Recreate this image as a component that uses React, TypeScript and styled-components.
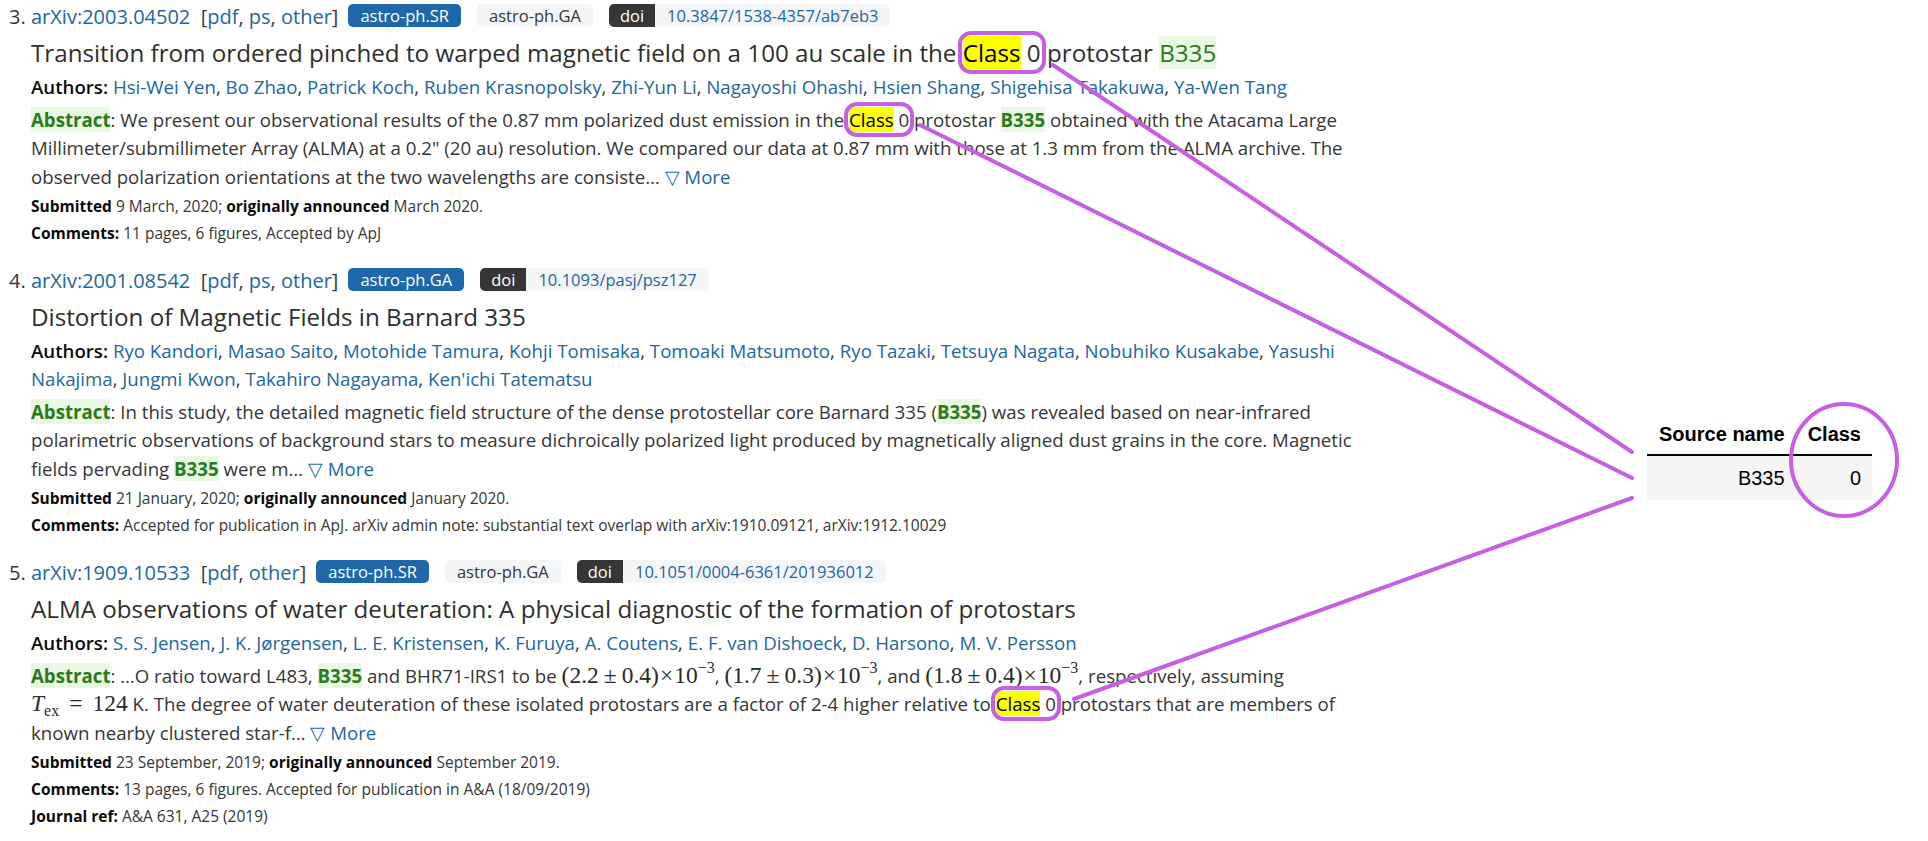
import React from 'react';
import styled, { createGlobalStyle } from 'styled-components';

const GlobalStyle = createGlobalStyle`
  html, body {
    margin: 0;
    padding: 0;
    background: #ffffff;
  }

  body {
    font-family: "Open Sans", "Noto Sans", sans-serif;
    color: #363636;
  }
`;

const Page = styled.div`
  position: relative;
  display: flex;
  align-items: flex-start;
  width: 1928px;
  height: 841px;
  overflow: hidden;
`;

const ResultList = styled.ol`
  margin: 0;
  padding: 3px 0 0 31px;
  width: 1339px;
  flex-shrink: 0;
`;

const Result = styled.li`
  font-size: 20px;
  line-height: 28px;
  margin-bottom: 21px;
`;

const ListTitle = styled.p`
  margin: 0;
  font-size: 20px;
  line-height: 28px;
  white-space: nowrap;
`;

const Link = styled.a`
  color: #2167a1;
  text-decoration: none;
`;

const TagGroup = styled.span`
  margin-left: 10px;
`;

const Tag = styled.span<{ $primary?: boolean }>`
  display: inline-flex;
  align-items: center;
  height: 23px;
  padding: 0 12px;
  margin-right: 16px;
  border-radius: 5px;
  font-size: 16.5px;
  line-height: 23px;
  vertical-align: 2px;
  background: ${(p) => (p.$primary ? '#1e67a9' : '#f4f5f6')};
  color: ${(p) => (p.$primary ? '#ffffff' : '#363636')};
`;

const DoiTag = styled.span`
  display: inline-flex;
  height: 23px;
  border-radius: 5px;
  overflow: hidden;
  font-size: 16.5px;
  line-height: 23px;
  vertical-align: 2px;
`;

const DoiLabel = styled.span`
  padding: 0 11px;
  background: #363636;
  color: #ffffff;
`;

const DoiValue = styled.a`
  padding: 0 12px;
  background: #f4f5f6;
  color: #2167a1;
  text-decoration: none;
`;

const Title = styled.p`
  margin: 6px 0 0;
  font-size: 24.2px;
  line-height: 32px;
  font-weight: 400;
  color: #2e2e2e;
`;

const Authors = styled.p`
  margin: 4px 0 0;
  font-size: 18.67px;
  line-height: 28px;
`;

const Label = styled.span`
  font-weight: 600;
  color: #0a0a0a;
`;

const Abstract = styled.p`
  margin: 4.75px 0 0;
  font-size: 18.67px;
  line-height: 28.5px;
`;

const Hit = styled.span<{ $bold?: boolean }>`
  color: #2b7a1e;
  background: #e8f8e2;
  font-weight: ${(p) => (p.$bold ? 700 : 'inherit')};
`;

const Mark = styled.span`
  background: #ffff00;
  color: #000000;
`;

const Boxed = styled.span`
  outline: 4px solid #c65fe2;
  outline-offset: 1px;
  border-radius: 8px;
`;

const MathText = styled.span`
  font-family: "Liberation Serif", "DejaVu Serif", serif;
  font-size: 23.5px;
  line-height: 1;
  color: #2a2a2a;
`;

const MathVar = styled.i`
  font-style: italic;
`;

const Op = styled.span<{ $space?: number }>`
  margin: 0 ${(p) => p.$space ?? 5}px;
`;

const Sup = styled.sup`
  font-size: 16px;
  line-height: 0;
  vertical-align: 10px;
`;

const Sub = styled.sub`
  font-size: 16px;
  line-height: 0;
  vertical-align: -5px;
`;

const Meta = styled.p<{ $gap?: number }>`
  margin: ${(p) => p.$gap ?? 1}px 0 0;
  font-size: 15.5px;
  line-height: 26px;
`;

const Strong = styled.span`
  font-weight: 700;
  color: #0a0a0a;
`;

const Aside = styled.aside`
  margin-left: auto;
  margin-right: 56px;
  padding-top: 413px;
`;

const DataTable = styled.table`
  border-collapse: collapse;
  font-family: "Liberation Sans", Arial, sans-serif;
  font-size: 20px;
  line-height: 24px;
  color: #000000;
`;

const HeadCell = styled.th`
  padding: 9px 11px 8px 12px;
  text-align: right;
  font-weight: 700;
  border-bottom: 2px solid #000000;
`;

const BodyCell = styled.td`
  padding: 10px 11px 10px 12px;
  text-align: right;
  background: #f5f5f5;
`;

const Overlay = styled.svg`
  position: absolute;
  top: 0;
  left: 0;
  width: 1928px;
  height: 841px;
  pointer-events: none;
  z-index: 2;
`;

const More = () => <Link href="#">▽ More</Link>;

const ClassZero = () => (
  <Boxed>
    <Mark>Class</Mark> 0
  </Boxed>
);

const Ratio = ({ value, error }: { value: string; error: string }) => (
  <MathText>
    ({value}
    <Op>±</Op>
    {error})<Op $space={1}>×</Op>10<Sup>−3</Sup>
  </MathText>
);

export default function App() {
  return (
    <>
      <GlobalStyle />
      <Page>
        <ResultList start={3}>
          <Result>
            <ListTitle>
              <Link href="#">arXiv:2003.04502</Link>
              {'\u00a0\u00a0'}[<Link href="#">pdf</Link>, <Link href="#">ps</Link>, <Link href="#">other</Link>]
              <TagGroup>
                <Tag $primary>astro-ph.SR</Tag>
                <Tag>astro-ph.GA</Tag>
                <DoiTag>
                  <DoiLabel>doi</DoiLabel>
                  <DoiValue href="#">10.3847/1538-4357/ab7eb3</DoiValue>
                </DoiTag>
              </TagGroup>
            </ListTitle>
            <Title>
              Transition from ordered pinched to warped magnetic field on a 100 au scale in the <ClassZero /> protostar{' '}
              <Hit>B335</Hit>
            </Title>
            <Authors>
              <Label>Authors:</Label> <Link href="#">Hsi-Wei Yen</Link>, <Link href="#">Bo Zhao</Link>,{' '}
              <Link href="#">Patrick Koch</Link>, <Link href="#">Ruben Krasnopolsky</Link>, <Link href="#">Zhi-Yun Li</Link>,{' '}
              <Link href="#">Nagayoshi Ohashi</Link>, <Link href="#">Hsien Shang</Link>, <Link href="#">Shigehisa Takakuwa</Link>,{' '}
              <Link href="#">Ya-Wen Tang</Link>
            </Authors>
            <Abstract>
              <Hit $bold>Abstract</Hit>: We present our observational results of the 0.87 mm polarized dust emission in the{' '}
              <ClassZero /> protostar <Hit $bold>B335</Hit> obtained with the Atacama Large Millimeter/submillimeter Array (ALMA)
              at a 0.2" (20 au) resolution. We compared our data at 0.87 mm with those at 1.3 mm from the ALMA archive. The
              observed polarization orientations at the two wavelengths are consiste… <More />
            </Abstract>
            <Meta $gap={1.75}>
              <Strong>Submitted</Strong> 9 March, 2020; <Strong>originally announced</Strong> March 2020.
            </Meta>
            <Meta>
              <Strong>Comments:</Strong> 11 pages, 6 figures, Accepted by ApJ
            </Meta>
          </Result>

          <Result>
            <ListTitle>
              <Link href="#">arXiv:2001.08542</Link>
              {'\u00a0\u00a0'}[<Link href="#">pdf</Link>, <Link href="#">ps</Link>, <Link href="#">other</Link>]
              <TagGroup>
                <Tag $primary>astro-ph.GA</Tag>
                <DoiTag>
                  <DoiLabel>doi</DoiLabel>
                  <DoiValue href="#">10.1093/pasj/psz127</DoiValue>
                </DoiTag>
              </TagGroup>
            </ListTitle>
            <Title>Distortion of Magnetic Fields in Barnard 335</Title>
            <Authors>
              <Label>Authors:</Label> <Link href="#">Ryo Kandori</Link>, <Link href="#">Masao Saito</Link>,{' '}
              <Link href="#">Motohide Tamura</Link>, <Link href="#">Kohji Tomisaka</Link>, <Link href="#">Tomoaki Matsumoto</Link>,{' '}
              <Link href="#">Ryo Tazaki</Link>, <Link href="#">Tetsuya Nagata</Link>, <Link href="#">Nobuhiko Kusakabe</Link>,{' '}
              <Link href="#">Yasushi Nakajima</Link>, <Link href="#">Jungmi Kwon</Link>, <Link href="#">Takahiro Nagayama</Link>,{' '}
              <Link href="#">Ken'ichi Tatematsu</Link>
            </Authors>
            <Abstract>
              <Hit $bold>Abstract</Hit>: In this study, the detailed magnetic field structure of the dense protostellar core
              Barnard 335 (<Hit $bold>B335</Hit>) was revealed based on near-infrared polarimetric observations of background
              stars to measure dichroically polarized light produced by magnetically aligned dust grains in the core. Magnetic
              fields pervading <Hit $bold>B335</Hit> were m… <More />
            </Abstract>
            <Meta $gap={1.75}>
              <Strong>Submitted</Strong> 21 January, 2020; <Strong>originally announced</Strong> January 2020.
            </Meta>
            <Meta>
              <Strong>Comments:</Strong> Accepted for publication in ApJ. arXiv admin note: substantial text overlap with
              arXiv:1910.09121, arXiv:1912.10029
            </Meta>
          </Result>

          <Result>
            <ListTitle>
              <Link href="#">arXiv:1909.10533</Link>
              {'\u00a0\u00a0'}[<Link href="#">pdf</Link>, <Link href="#">other</Link>]
              <TagGroup>
                <Tag $primary>astro-ph.SR</Tag>
                <Tag>astro-ph.GA</Tag>
                <DoiTag>
                  <DoiLabel>doi</DoiLabel>
                  <DoiValue href="#">10.1051/0004-6361/201936012</DoiValue>
                </DoiTag>
              </TagGroup>
            </ListTitle>
            <Title>ALMA observations of water deuteration: A physical diagnostic of the formation of protostars</Title>
            <Authors>
              <Label>Authors:</Label> <Link href="#">S. S. Jensen</Link>, <Link href="#">J. K. Jørgensen</Link>,{' '}
              <Link href="#">L. E. Kristensen</Link>, <Link href="#">K. Furuya</Link>, <Link href="#">A. Coutens</Link>,{' '}
              <Link href="#">E. F. van Dishoeck</Link>, <Link href="#">D. Harsono</Link>, <Link href="#">M. V. Persson</Link>
            </Authors>
            <Abstract>
              <Hit $bold>Abstract</Hit>: …O ratio toward L483, <Hit $bold>B335</Hit> and BHR71-IRS1 to be{' '}
              <Ratio value="2.2" error="0.4" />, <Ratio value="1.7" error="0.3" />, and <Ratio value="1.8" error="0.4" />,
              respectively, assuming{' '}
              <MathText>
                <MathVar>T</MathVar>
                <Sub>ex</Sub>
                <Op $space={10}>=</Op>124
              </MathText>{' '}
              K. The degree of water deuteration of these isolated protostars are a factor of 2-4 higher relative to{' '}
              <ClassZero /> protostars that are members of known nearby clustered star-f… <More />
            </Abstract>
            <Meta $gap={1.75}>
              <Strong>Submitted</Strong> 23 September, 2019; <Strong>originally announced</Strong> September 2019.
            </Meta>
            <Meta>
              <Strong>Comments:</Strong> 13 pages, 6 figures. Accepted for publication in A&amp;A (18/09/2019)
            </Meta>
            <Meta>
              <Strong>Journal ref:</Strong> A&amp;A 631, A25 (2019)
            </Meta>
          </Result>
        </ResultList>

        <Aside>
          <DataTable>
            <thead>
              <tr>
                <HeadCell>Source name</HeadCell>
                <HeadCell>Class</HeadCell>
              </tr>
            </thead>
            <tbody>
              <tr>
                <BodyCell>B335</BodyCell>
                <BodyCell>0</BodyCell>
              </tr>
            </tbody>
          </DataTable>
        </Aside>

        <Overlay viewBox="0 0 1928 841">
          <g stroke="#c65fe2" strokeWidth={4} fill="none" strokeLinecap="round">
            <line x1={1053} y1={65} x2={1632} y2={452} />
            <line x1={920} y1={125} x2={1632} y2={478} />
            <line x1={1074} y1={699} x2={1632} y2={498} />
            <ellipse cx={1844} cy={460} rx={53} ry={56} />
          </g>
        </Overlay>
      </Page>
    </>
  );
}
